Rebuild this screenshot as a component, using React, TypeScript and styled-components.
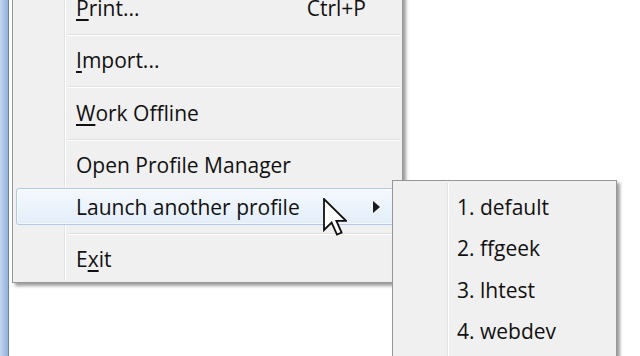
import styled, { createGlobalStyle, css } from "styled-components";

const GlobalStyle = createGlobalStyle`
  html, body {
    margin: 0;
    padding: 0;
    background: #fff;
  }
  body {
    font-family: "Open Sans", "Noto Sans", "Liberation Sans", sans-serif;
  }
`;

const Screen = styled.div`
  position: relative;
  width: 640px;
  height: 356px;
  overflow: hidden;
  display: flex;
  background: #fff;
`;

const WindowEdge = styled.div`
  flex: none;
  width: 8px;
  background: linear-gradient(to right, #c4d7ef, #a6c2e4 55%, #93b3dc);
  border-right: 1px solid #72849b;
`;

const Desktop = styled.div`
  flex: 1;
  background: #fff;
`;

const Menu = styled.div<{ $left: number; $top: number; $width: number; $gutter: number; $padTop?: number; $padBottom?: number }>`
  position: absolute;
  left: ${(p) => p.$left}px;
  top: ${(p) => p.$top}px;
  width: ${(p) => p.$width}px;
  box-sizing: border-box;
  padding: ${(p) => p.$padTop ?? 2}px 2px ${(p) => p.$padBottom ?? 2}px;
  background: #f0f0f0;
  border: 1px solid #979797;
  box-shadow: 3px 3px 3px rgba(0, 0, 0, 0.38);

  &::before {
    content: "";
    position: absolute;
    top: 2px;
    bottom: 2px;
    left: ${(p) => p.$gutter}px;
    width: 1px;
    background: #e2e3e3;
    box-shadow: 1px 0 0 #fff;
  }
`;

const Item = styled.div<{ $indent: number; $active?: boolean }>`
  position: relative;
  display: flex;
  align-items: center;
  height: 41.5px;
  padding-left: ${(p) => p.$indent}px;
  font-size: 21px;
  color: #111;
  white-space: nowrap;

  & > * {
    position: relative;
    z-index: 1;
  }

  ${(p) =>
    p.$active &&
    css`
      &::after {
        content: "";
        position: absolute;
        top: 2px;
        bottom: 3px;
        left: 1px;
        right: 1px;
        border: 1px solid #aecbeb;
        border-radius: 3px;
        background: linear-gradient(#f5f9fe, #e3edf9);
        box-shadow: inset 0 0 0 1px rgba(255, 255, 255, 0.6);
      }
    `}
`;

const Label = styled.span`
  u {
    text-decoration-thickness: 2px;
    text-underline-offset: 3px;
  }
`;

const Shortcut = styled.span`
  margin-left: auto;
  margin-right: 34px;
`;

const SubArrow = styled.svg`
  margin-left: auto;
  margin-right: 20px;
  width: 7px;
  height: 12px;
`;

const Separator = styled.div<{ $indent: number }>`
  height: 11px;
  margin-left: ${(p) => p.$indent}px;
  position: relative;

  &::before {
    content: "";
    position: absolute;
    left: 0;
    right: 0;
    top: 5px;
    height: 1px;
    background: #e0e0e0;
    box-shadow: 0 1px 0 #fff;
  }
`;

const Cursor = styled.svg`
  position: absolute;
  left: 323px;
  top: 198px;
  width: 24px;
  height: 38px;
  z-index: 5;
`;

const MAIN_INDENT = 61;
const SUB_INDENT = 62;

const profiles = ["1. default", "2. ffgeek", "3. lhtest", "4. webdev"];

export default function App() {
  return (
    <>
      <GlobalStyle />
      <Screen>
        <WindowEdge />
        <Desktop />

        <Menu $left={12} $top={-16} $width={391} $gutter={51}>
          <Item $indent={MAIN_INDENT}>
            <Label>
              <u>P</u>rint...
            </Label>
            <Shortcut>Ctrl+P</Shortcut>
          </Item>
          <Separator $indent={53} />
          <Item $indent={MAIN_INDENT}>
            <Label>
              <u>I</u>mport...
            </Label>
          </Item>
          <Separator $indent={53} />
          <Item $indent={MAIN_INDENT}>
            <Label>
              <u>W</u>ork Offline
            </Label>
          </Item>
          <Separator $indent={53} />
          <Item $indent={MAIN_INDENT}>
            <Label>Open Profile Manager</Label>
          </Item>
          <Item $indent={MAIN_INDENT} $active>
            <Label>Launch another profile</Label>
            <SubArrow viewBox="0 0 7 12">
              <path d="M0 0 L7 6 L0 12 Z" fill="#1a1a1a" />
            </SubArrow>
          </Item>
          <Separator $indent={53} />
          <Item $indent={MAIN_INDENT}>
            <Label>
              E<u>x</u>it
            </Label>
          </Item>
        </Menu>

        <Menu $left={392} $top={180} $width={225} $gutter={54} $padTop={5} $padBottom={20}>
          {profiles.map((name) => (
            <Item key={name} $indent={SUB_INDENT}>
              <Label>{name}</Label>
            </Item>
          ))}
        </Menu>

        <Cursor viewBox="0 0 12 19">
          <path
            d="M0.5 0.5 V16 L4.3 12.3 L7 18.3 L9.3 17.3 L6.7 11.4 H11.5 Z"
            fill="#fff"
            stroke="#111"
            strokeWidth="0.9"
            strokeLinejoin="miter"
          />
        </Cursor>
      </Screen>
    </>
  );
}
